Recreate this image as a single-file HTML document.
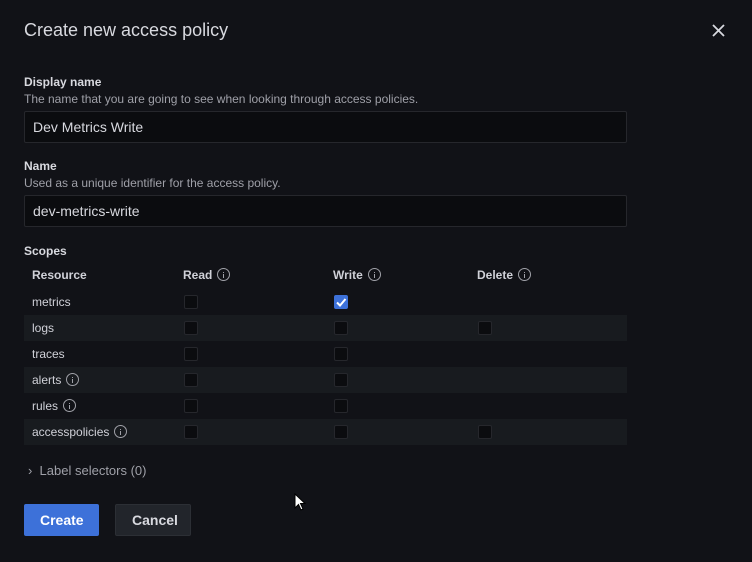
<!DOCTYPE html>
<html><head><style>
*{margin:0;padding:0;box-sizing:border-box}
body{width:752px;height:562px;background:#111217;font-family:"Liberation Sans",sans-serif;color:#ccccdc;position:relative;overflow:hidden}
.a{position:absolute;white-space:nowrap}
.title{left:24px;top:20px;font-size:18px;color:#d8d9df}
.lbl{font-size:12px;font-weight:bold;color:#d8d9df}
.desc{font-size:12px;color:#9fa0a8}
.inp{position:absolute;left:24px;width:603px;height:32px;background:#0b0c0f;border:1px solid #26272c;border-radius:2px;font-size:14px;color:#d8d9df;padding:7px 8px}
.row{position:absolute;left:24px;width:603px;height:26px}
.s{background:#181b1f}
.cell{position:absolute;top:6px;font-size:12px;color:#d0d1d8}
.cb{position:absolute;top:6px;width:14px;height:14px;background:#0b0c0f;border:1px solid #26272c;border-radius:2px}
.i{display:inline-block;width:13px;height:13px;border:1px solid #a0a1a8;border-radius:50%;vertical-align:-2px;margin-left:5px;position:relative}
.i:after{content:"";position:absolute;left:5px;top:4.5px;width:1px;height:4px;background:#a0a1a8}
.i:before{content:"";position:absolute;left:5px;top:2.5px;width:1px;height:1px;background:#a0a1a8}
.btn{position:absolute;top:504px;height:32px;font-size:14px;font-weight:bold;padding:8px 16px;border-radius:2px}
</style></head><body>
<div class="a title">Create new access policy</div>
<svg class="a" style="left:712px;top:24px" width="13" height="13" viewBox="0 0 13 13"><path d="M1 1L12 12M12 1L1 12" stroke="#d8d9df" stroke-width="1.8"/></svg>
<div class="a lbl" style="left:24px;top:75px">Display name</div>
<div class="a desc" style="left:24px;top:92px">The name that you are going to see when looking through access policies.</div>
<div class="inp" style="top:111px">Dev Metrics Write</div>
<div class="a lbl" style="left:24px;top:159px">Name</div>
<div class="a desc" style="left:24px;top:176px">Used as a unique identifier for the access policy.</div>
<div class="inp" style="top:195px">dev-metrics-write</div>
<div class="a lbl" style="left:24px;top:244px">Scopes</div>
<div class="row" style="top:262px"><span class="cell" style="left:8px;font-weight:bold">Resource</span><span class="cell" style="left:159px;font-weight:bold">Read<i class="i"></i></span><span class="cell" style="left:309px;font-weight:bold">Write<i class="i"></i></span><span class="cell" style="left:453px;font-weight:bold">Delete<i class="i"></i></span></div>
<div class="row" style="top:289px"><span class="cell" style="left:8px">metrics</span><span class="cb" style="left:160px"></span><span class="cb" style="left:310px;background:#3d71d9;border-color:#3d71d9"><svg width="12" height="12" viewBox="0 0 12 12" style="position:absolute;left:0;top:0"><path d="M2 6.5L5 9.5L10.5 3" stroke="#fff" stroke-width="2" fill="none"/></svg></span></div>
<div class="row s" style="top:315px"><span class="cell" style="left:8px">logs</span><span class="cb" style="left:160px"></span><span class="cb" style="left:310px"></span><span class="cb" style="left:454px"></span></div>
<div class="row" style="top:341px"><span class="cell" style="left:8px">traces</span><span class="cb" style="left:160px"></span><span class="cb" style="left:310px"></span></div>
<div class="row s" style="top:367px"><span class="cell" style="left:8px">alerts<i class="i"></i></span><span class="cb" style="left:160px"></span><span class="cb" style="left:310px"></span></div>
<div class="row" style="top:393px"><span class="cell" style="left:8px">rules<i class="i"></i></span><span class="cb" style="left:160px"></span><span class="cb" style="left:310px"></span></div>
<div class="row s" style="top:419px"><span class="cell" style="left:8px">accesspolicies<i class="i"></i></span><span class="cb" style="left:160px"></span><span class="cb" style="left:310px"></span><span class="cb" style="left:454px"></span></div>
<div class="a desc" style="left:28px;top:463px;font-size:13px">›&nbsp; Label selectors (0)</div>
<div class="btn" style="left:24px;width:75px;background:#3d71d9;color:#fff">Create</div>
<div class="btn" style="left:115px;width:76px;background:#22252b;color:#d8d9df;border:1px solid #2c2f35;padding-top:7px">Cancel</div>
<svg class="a" style="left:294px;top:493px" width="12" height="19" viewBox="0 0 12 19"><path d="M1 1L1 15L4.5 11.5L7 17L9 16L6.5 10.5L11 10.5Z" fill="#fff" stroke="#000" stroke-width="1"/></svg>
</body></html>
